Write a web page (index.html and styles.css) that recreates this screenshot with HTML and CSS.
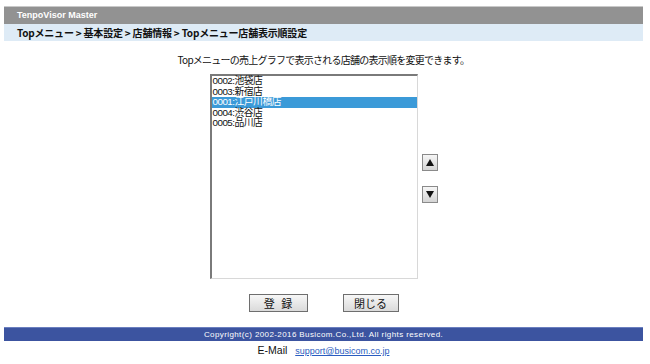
FILE: index.html
```html
<html>
    <head>
        <link rel="stylesheet" href="styles.css">
    </head>
    <body>
        <title>Topメニュー店舗表示順設定</title>
        <div class="page">
            <div class="header">TenpoVisor Master</div>
            <div class="crumbs">Topメニュー &gt; 基本設定 &gt; 店舗情報 &gt; Topメニュー店舗表示順設定</div>

            <p class="lead">Topメニューの売上グラフで表示される店舗の表示順を変更できます。</p>

            <div class="editor">
                <div class="listbox" id="shops">
                    <div class="opt">0002:池袋店</div>
                    <div class="opt">0003:新宿店</div>
                    <div class="opt selected">0001:江戸川橋店</div>
                    <div class="opt">0004:渋谷店</div>
                    <div class="opt">0005:品川店</div>
                </div>
                <div class="arrows">
                    <button class="arrow" id="up">
                        <svg width="8" height="7" viewBox="0 0 8 7"><polygon points="4,0 8,7 0,7" fill="#111"/></svg>
                    </button>
                    <button class="arrow" id="down">
                        <svg width="8" height="7" viewBox="0 0 8 7"><polygon points="0,0 8,0 4,7" fill="#111"/></svg>
                    </button>
                </div>
            </div>

            <div class="actions">
                <button class="button save">登 録</button>
                <button class="button close">閉じる</button>
            </div>

            <div class="footer">Copyright(c) 2002-2016 Busicom.Co.,Ltd. All rights reserved.</div>
            <div class="mail">E-Mail <a href="#">support@busicom.co.jp</a></div>
        </div>

        <script>
            document.getElementById("shops").addEventListener("click", (event) => {
                if(event.target.classList.contains("opt")) {
                    Array.prototype.forEach.call(document.getElementsByClassName("opt"), (opt) => {
                        opt.classList.remove("selected");
                    });
                    event.target.classList.add("selected");
                }
            });
            const move = (dir) => {
                const sel = document.querySelector(".opt.selected");
                if(!sel) return;
                if(dir < 0 && sel.previousElementSibling) {
                    sel.parentNode.insertBefore(sel, sel.previousElementSibling);
                } else if(dir > 0 && sel.nextElementSibling) {
                    sel.parentNode.insertBefore(sel.nextElementSibling, sel);
                }
            };
            document.getElementById("up").addEventListener("click", () => move(-1));
            document.getElementById("down").addEventListener("click", () => move(1));
        </script>
    </body>
</html>
```

FILE: styles.css
```css
body {
    margin: 0;
    background-color: #fff;
}
* {
    box-sizing: border-box;
    font-family: "Noto Sans CJK JP", "Liberation Sans", sans-serif;
}
.page {
    margin: 0 7px 0 4px;
    padding-top: 6px;
}
.header {
    height: 18px;
    background-color: #929292;
    border-top: 1px solid #c9c9c9;
    color: #fff;
    font-family: "Liberation Sans", sans-serif;
    font-weight: bold;
    font-size: 9px;
    line-height: 16px;
    padding-left: 13px;
}
.crumbs {
    height: 17px;
    background-color: #deebf6;
    color: #111;
    font-weight: bold;
    font-size: 10px;
    line-height: 17px;
    padding-left: 13px;
    letter-spacing: -0.2px;
}
.lead {
    margin: 13px 0 0;
    text-align: center;
    font-size: 10px;
    line-height: 12px;
    letter-spacing: -0.75px;
    color: #111;
}
.editor {
    display: flex;
    justify-content: center;
    align-items: center;
    gap: 4px;
    margin-top: 8px;
}
.listbox {
    width: 208px;
    height: 205px;
    border-top: 2px solid #7a7a7a;
    border-left: 2px solid #7a7a7a;
    border-right: 1px solid #d8d8d8;
    border-bottom: 1px solid #d8d8d8;
    background-color: #fff;
}
.opt {
    font-family: "Liberation Sans", "Noto Sans CJK JP", sans-serif;
    font-size: 9.8px;
    line-height: 10.6px;
    height: 10.6px;
    color: #111;
    padding-left: 1px;
    letter-spacing: -0.5px;
    white-space: nowrap;
    cursor: default;
}
.opt.selected {
    background-color: #3b9ad8;
    color: #fff;
}
.arrows {
    display: flex;
    flex-direction: column;
    gap: 15px;
    padding-top: 3px;
}
.arrow {
    width: 16px;
    height: 17px;
    padding: 0;
    border: 1px solid #8a8a8a;
    background: linear-gradient(#f6f6f6, #d4d4d4);
    display: flex;
    align-items: center;
    justify-content: center;
    cursor: pointer;
}
.actions {
    display: flex;
    justify-content: center;
    gap: 35px;
    margin-top: 15px;
}
.button {
    height: 18px;
    padding: 0;
    border: 1px solid #6e6e6e;
    background: linear-gradient(#f7f7f7, #dadada);
    font-size: 11px;
    line-height: 16px;
    color: #111;
    cursor: pointer;
}
.save {
    width: 59px;
    letter-spacing: 2px;
    padding-left: 2px;
}
.close {
    width: 56px;
}
.footer {
    margin-top: 15px;
    height: 14px;
    background-color: #3c54a0;
    border-top: 1px solid #6b7fbf;
    color: #fff;
    font-family: "Liberation Sans", sans-serif;
    font-size: 8px;
    line-height: 13px;
    letter-spacing: 0.4px;
    text-align: center;
}
.mail {
    text-align: center;
    font-family: "Liberation Sans", sans-serif;
    font-size: 10.5px;
    line-height: 18px;
    color: #111;
}
.mail a {
    font-family: "Liberation Sans", sans-serif;
    font-size: 9px;
    color: #2a5cc0;
    margin-left: 5px;
}
```
